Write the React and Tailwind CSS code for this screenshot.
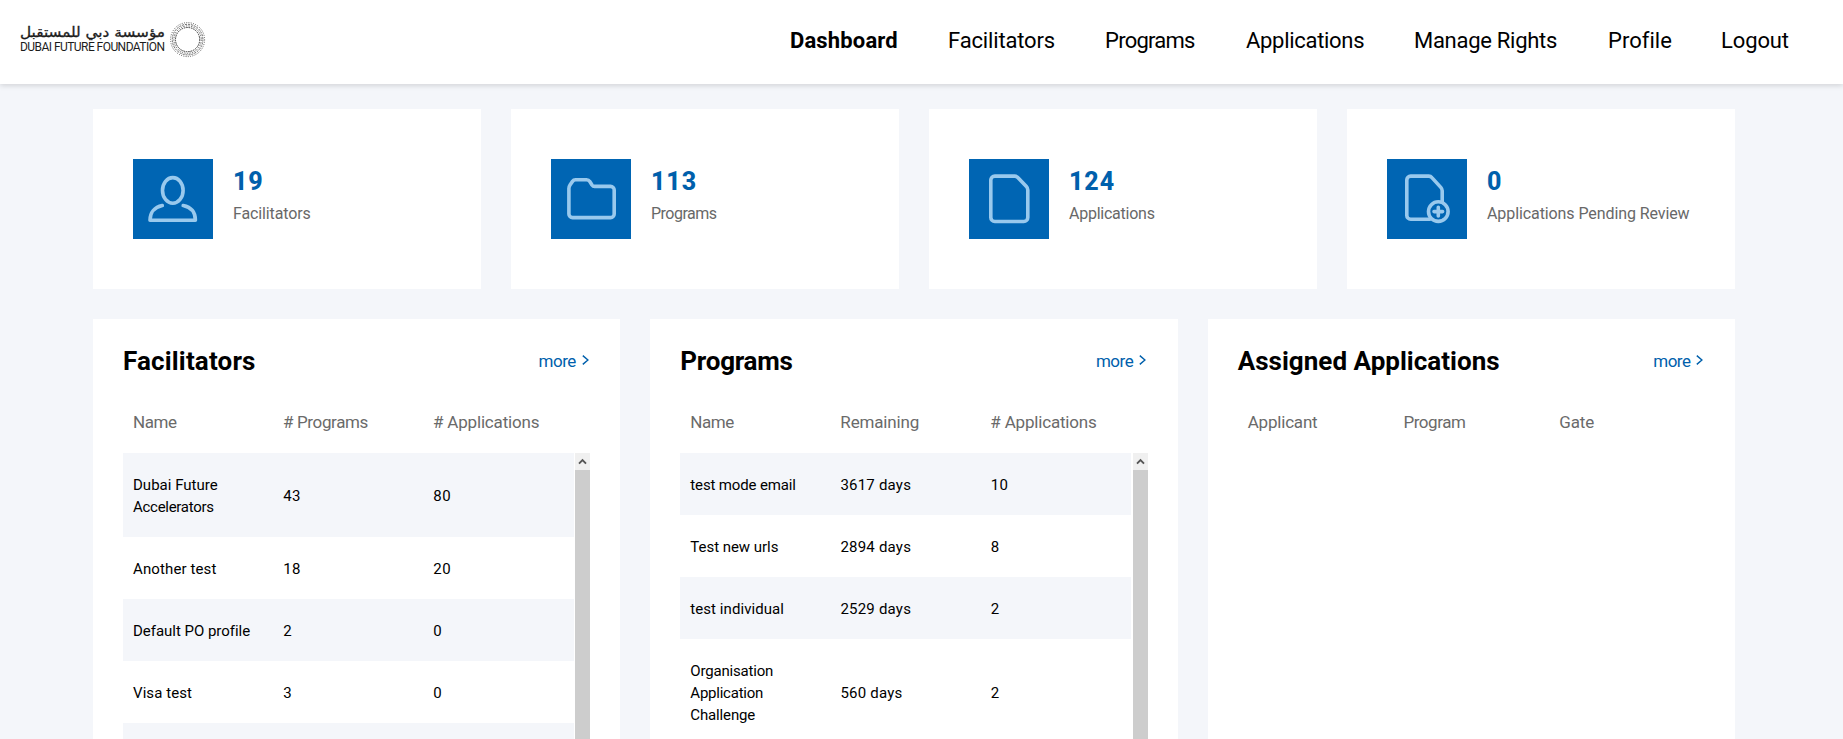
const NAV = [
  { text: "Dashboard", cls: "font-bold w-[108px] tracking-[0.15px]" },
  { text: "Facilitators", cls: "w-[107px] tracking-[-0.15px]" },
  { text: "Programs", cls: "w-[91px] tracking-[-0.74px]" },
  { text: "Applications", cls: "w-[118px] tracking-[-0.3px]" },
  { text: "Manage Rights", cls: "w-[144px] tracking-[-0.28px]" },
  { text: "Profile", cls: "w-[63px] tracking-[0.02px]" },
  { text: "Logout", cls: "w-[68px] tracking-[-0.12px]" },
];

const STATS = [
  { value: "19", label: "Facilitators", cls: "tracking-[-0.12px]", icon: "person" },
  { value: "113", label: "Programs", cls: "tracking-[-0.5px]", icon: "folder" },
  { value: "124", label: "Applications", cls: "tracking-[-0.24px]", icon: "doc" },
  { value: "0", label: "Applications Pending Review", cls: "tracking-[-0.09px]", icon: "docPlus" },
];

const APPS = { text: "# Applications", cls: "tracking-[-0.18px]" };

const PANELS = [
  {
    title: "Facilitators",
    titleCls: "tracking-[0.16px]",
    head: [{ text: "Name", cls: "tracking-[-0.43px]" }, { text: "# Programs", cls: "tracking-[-0.36px]" }, APPS],
    rows: [
      [["Dubai Future", "Accelerators"], "43", "80"],
      [["Another test"], "18", "20"],
      [["Default PO profile"], "2", "0"],
      [["Visa test"], "3", "0"],
      [[""], "", ""],
    ],
  },
  {
    title: "Programs",
    titleCls: "tracking-[-0.25px]",
    head: [{ text: "Name", cls: "tracking-[-0.43px]" }, { text: "Remaining", cls: "tracking-[-0.15px]" }, APPS],
    rows: [
      [["test mode email"], "3617 days", "10"],
      [["Test new urls"], "2894 days", "8"],
      [["test individual"], "2529 days", "2"],
      [["Organisation", "Application", "Challenge"], "560 days", "2"],
    ],
  },
  {
    title: "Assigned Applications",
    titleCls: "tracking-[0.03px]",
    head: [
      { text: "Applicant", cls: "tracking-[-0.19px]" },
      { text: "Program", cls: "tracking-[-0.44px]" },
      { text: "Gate", cls: "tracking-[-0.13px]" },
    ],
    rows: null,
  },
];

const LINE_CLS = {
  "Dubai Future": "tracking-[0.02px]",
  Accelerators: "tracking-[-0.28px]",
  "Another test": "tracking-[0.12px]",
  "Default PO profile": "tracking-[-0.03px]",
  "Visa test": "tracking-[0.08px]",
  "test mode email": "tracking-[-0.14px]",
  "Test new urls": "tracking-[-0.04px]",
  "test individual": "tracking-[0.06px]",
  Organisation: "tracking-[-0.19px]",
  Application: "tracking-[-0.23px]",
  Challenge: "tracking-[-0.14px]",
};

const ICONS = {
  person: (
    <>
      <ellipse cx="39.8" cy="31.4" rx="10.3" ry="12.8" />
      <path d="M29.3 46.6C21.5 48.2 17 53.6 17 61.3H62.4C62.4 53.6 58 48.2 50.2 46.6" />
    </>
  ),
  folder: (
    <path d="M17.9 55V29.5C17.9 28 18.2 27.2 19 26L21.5 22.4C22.3 21.2 23.2 20.8 24.6 20.8H35.5C37 20.8 38 21.3 38.8 22.5L41 26C41.7 27 42.3 27.4 43.6 27.4H59.6A3.6 3.6 0 0 1 63.2 31V55A3.6 3.6 0 0 1 59.6 58.6H21.5A3.6 3.6 0 0 1 17.9 55Z" />
  ),
  doc: (
    <path d="M25.8 17.1H45.6C47 17.1 47.9 17.5 48.8 18.5L57.4 27.6C58.4 28.7 58.8 29.6 58.8 31V58.5A4 4 0 0 1 54.8 62.5H25.8A4 4 0 0 1 21.8 58.5V21.1A4 4 0 0 1 25.8 17.1Z" />
  ),
  docPlus: (
    <>
      <path d="M43 60.2H23.6A3.8 3.8 0 0 1 19.8 56.4V20.9A3.8 3.8 0 0 1 23.6 17.1H41.8C43.2 17.1 44 17.5 44.9 18.6L53.8 28.4C54.8 29.5 55.2 30.4 55.2 31.8V43.5" />
      <circle cx="51.3" cy="52.6" r="9.8" />
      <path d="M51.3 48.3V56.9M47 52.6H55.6" />
    </>
  ),
};

function Logo() {
  return (
    <div className="flex h-full items-start gap-[5px] pt-[21px] pl-5">
      <div className="flex w-[145px] flex-col whitespace-nowrap text-[#1c1c1c]">
        <svg width="145" height="20" className="block overflow-visible font-['DejaVu_Sans',sans-serif]" fill="#1c1c1c" stroke="#1c1c1c" strokeWidth="0.3">
          <text x="145" y="16" direction="rtl" fontSize="14" textLength="145" lengthAdjust="spacingAndGlyphs">
            مؤسسة دبي للمستقبل
          </text>
        </svg>
        <span className="text-[12px] leading-[13px] tracking-[-0.55px]">DUBAI FUTURE FOUNDATION</span>
      </div>
      <svg width="36" height="36" viewBox="0 0 36 36" fill="none" stroke="#222" className="mt-px">
        <circle cx="17.6" cy="17.6" r="17" strokeWidth="0.7" strokeDasharray="1 1.3" />
        <circle cx="17.6" cy="17.6" r="15.3" strokeWidth="0.7" strokeDasharray="2 1" />
        <circle cx="17.6" cy="17.6" r="13.7" strokeWidth="0.7" strokeDasharray="1.4 1.2" />
        <circle cx="17.6" cy="17.6" r="12.1" strokeWidth="0.9" strokeDasharray="1.6 0.8" />
      </svg>
    </div>
  );
}

function StatCard({ value, label, cls, icon }) {
  return (
    <div className="flex h-[180px] items-center gap-5 bg-white px-10">
      <svg width="80" height="80" viewBox="0 0 80 80" className="shrink-0 bg-[#0065b3]" fill="none" stroke="#99c9ed" strokeWidth="3.6" strokeLinecap="round" strokeLinejoin="round">
        {ICONS[icon]}
      </svg>
      <div className="mb-[3px] whitespace-nowrap">
        <div className="text-[25px] leading-8 font-extrabold tracking-[0.9px] text-[#0060ac]">{value}</div>
        <div className={`text-[16px] leading-8 text-[#686868] ${cls}`}>{label}</div>
      </div>
    </div>
  );
}

function ScrollTrack() {
  return (
    <div className="flex w-[15px] shrink-0 flex-col bg-[#cdcdcd]">
      <div className="flex h-[17px] items-center justify-center bg-[#f0f0f0]">
        <svg width="9" height="7" viewBox="0 0 9 7" fill="none" stroke="#555" strokeWidth="1.9">
          <path d="M1 5.6L4.5 2L8 5.6" />
        </svg>
      </div>
    </div>
  );
}

function Panel({ title, titleCls, head, rows }) {
  return (
    <section className="flex h-[420px] flex-col overflow-hidden bg-white px-[30px] pt-[22px] whitespace-nowrap">
      <div className="flex h-10 shrink-0 items-center justify-between">
        <h2 className={`text-[26px] leading-10 font-bold ${titleCls}`}>{title}</h2>
        <a className="flex items-center gap-[6px] pr-[1.5px] text-[17px] leading-10 tracking-[-0.5px] text-[#0060ac]">
          more
          <svg width="7" height="10" viewBox="0 0 7 10" fill="none" stroke="currentColor" strokeWidth="1.4" className="mb-[2px]">
            <path d="M0.8 0.6L5.9 5L0.8 9.4" />
          </svg>
        </a>
      </div>
      <div className={`mt-[21px] grid h-[51px] shrink-0 grid-cols-3 text-[17px] leading-10 text-[#6a6a6a] ${rows ? "w-[450px]" : "w-full"}`}>
        {head.map((h) => (
          <div key={h.text} className={`pl-[10px] ${h.cls}`}>{h.text}</div>
        ))}
      </div>
      {rows && (
        <div className="flex min-h-0 flex-1 justify-between overflow-hidden">
          <div className="w-[450.5px] shrink-0">
            {rows.map(([name, a, b], i) => (
              <div key={i} className={`grid min-h-[62px] grid-cols-3 items-center pt-[21px] pb-[19px] text-[15px] leading-[22px] ${i % 2 ? "bg-white" : "bg-[#f4f6fa]"}`}>
                <div className="pl-[10px]">
                  {name.map((n) => (
                    <div key={n} className={LINE_CLS[n]}>{n}</div>
                  ))}
                </div>
                <div className={`pl-[10px] ${a.includes("days") ? "tracking-[0.2px]" : "tracking-[0.5px]"}`}>{a}</div>
                <div className="pl-[10px] tracking-[0.5px]">{b}</div>
              </div>
            ))}
          </div>
          <ScrollTrack />
        </div>
      )}
    </section>
  );
}

export default function App() {
  return (
    <div className="flex h-[739px] flex-col overflow-hidden bg-[#f4f6fa] font-[Roboto,sans-serif] text-black">
      <header className="z-10 flex h-[84px] shrink-0 justify-between bg-white shadow-[0_2px_5px_rgba(0,0,0,0.13)]">
        <Logo />
        <nav className="flex items-center gap-[50px] pr-[54px] pb-[3px] text-[22px] leading-8 whitespace-nowrap">
          {NAV.map((n) => (
            <a key={n.text} className={n.cls}>{n.text}</a>
          ))}
        </nav>
      </header>
      <main className="flex flex-col gap-[30px] pt-[25px] pr-[108px] pl-[93px]">
        <div className="grid grid-cols-4 gap-[30px]">
          {STATS.map((s) => (
            <StatCard key={s.icon} {...s} />
          ))}
        </div>
        <div className="grid grid-cols-3 gap-[30px]">
          {PANELS.map((p) => (
            <Panel key={p.title} {...p} />
          ))}
        </div>
      </main>
    </div>
  );
}
